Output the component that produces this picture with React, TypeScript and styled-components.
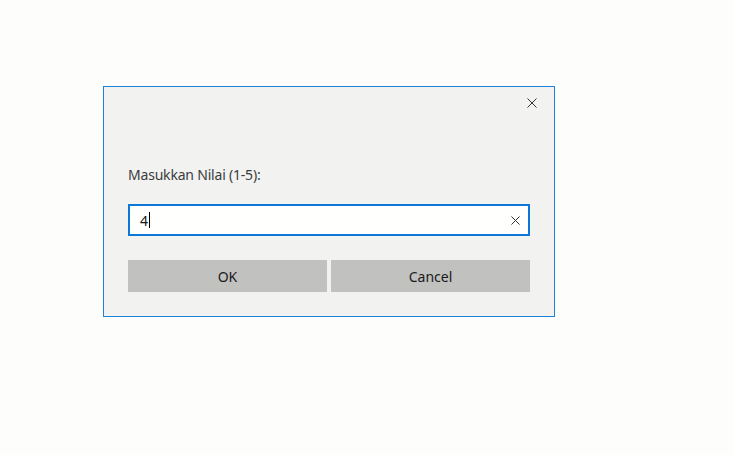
import React from "react";
import styled, { createGlobalStyle } from "styled-components";

const Global = createGlobalStyle`
  html, body { margin: 0; padding: 0; background: #fdfdfb; }
  body { font-family: "Noto Sans", "Open Sans", sans-serif; }
`;

const Page = styled.div`
  width: 733px;
  height: 455px;
  box-sizing: border-box;
  padding: 86px 0 0 103px;
  display: flex;
  align-items: flex-start;
`;

const Dialog = styled.div`
  width: 452px;
  height: 231px;
  box-sizing: border-box;
  border: 1px solid #1a82d8;
  background: #f2f2f1;
  display: flex;
  flex-direction: column;
`;

const TitleBar = styled.div`
  height: 32px;
  display: flex;
  justify-content: flex-end;
`;

const CloseButton = styled.div`
  width: 45px;
  height: 32px;
  display: flex;
  align-items: center;
  justify-content: center;
`;

const Body = styled.div`
  padding: 0 24px;
  display: flex;
  flex-direction: column;
`;

const Label = styled.div`
  margin-top: 46px;
  font-size: 14px;
  line-height: 20px;
  color: #3c3c3c;
  letter-spacing: -0.2px;
`;

const InputBox = styled.div`
  margin-top: 19px;
  height: 32px;
  box-sizing: border-box;
  border: 2px solid #0b78d7;
  background: #fffffd;
  display: flex;
  align-items: center;
  padding: 0 3px 0 10px;
`;

const InputText = styled.div`
  flex: 1;
  display: flex;
  align-items: center;
  font-size: 14px;
  color: #1a1a1a;
`;

const Caret = styled.span`
  display: inline-block;
  width: 1px;
  height: 16px;
  background: #000;
  margin-left: 1px;
`;

const ClearButton = styled.div`
  width: 20px;
  height: 20px;
  display: flex;
  align-items: center;
  justify-content: center;
`;

const Buttons = styled.div`
  margin-top: 24px;
  display: grid;
  grid-template-columns: 1fr 1fr;
  gap: 4px;
`;

const Button = styled.div`
  height: 32px;
  background: #c1c1bf;
  display: flex;
  align-items: center;
  justify-content: center;
  font-size: 14px;
  color: #1a1a1a;
`;

const Cross = ({ size }: { size: number }) => (
  <svg width={size} height={size} viewBox={`0 0 ${size} ${size}`}>
    <path
      d={`M0.5 0.5 L${size - 0.5} ${size - 0.5} M${size - 0.5} 0.5 L0.5 ${size - 0.5}`}
      stroke="#333"
      strokeWidth="1"
      fill="none"
    />
  </svg>
);

export default function App() {
  return (
    <>
      <Global />
      <Page>
        <Dialog>
          <TitleBar>
            <CloseButton>
              <Cross size={10} />
            </CloseButton>
          </TitleBar>
          <Body>
            <Label>Masukkan Nilai (1-5):</Label>
            <InputBox>
              <InputText>
                4<Caret />
              </InputText>
              <ClearButton>
                <Cross size={9} />
              </ClearButton>
            </InputBox>
            <Buttons>
              <Button>OK</Button>
              <Button>Cancel</Button>
            </Buttons>
          </Body>
        </Dialog>
      </Page>
    </>
  );
}
